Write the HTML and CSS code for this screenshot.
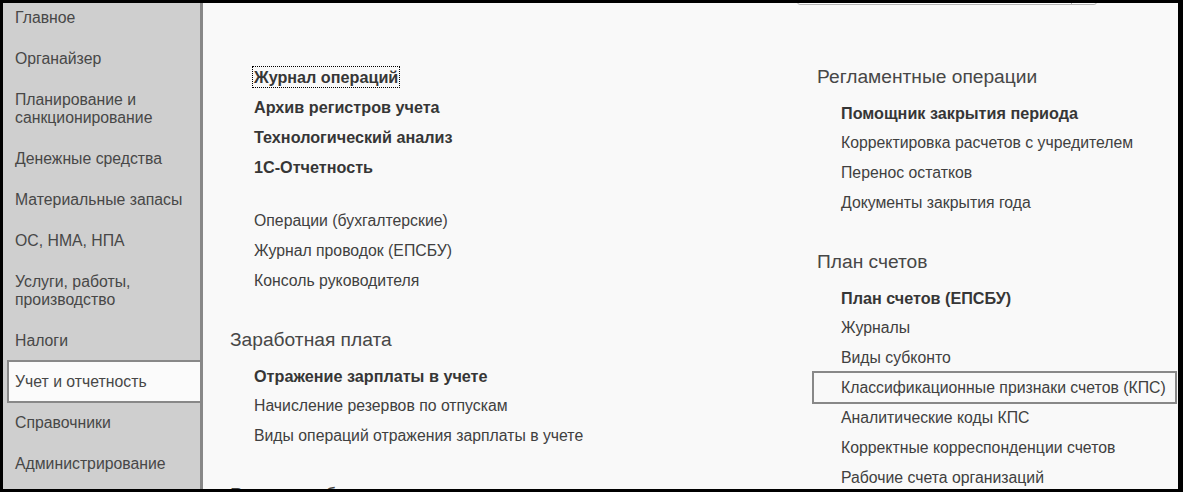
FILE: index.html
```html
<!DOCTYPE html>
<html lang="ru">
<head>
<meta charset="utf-8">
<link rel="stylesheet" href="styles.css">
</head>
<body>
<div class="frame">
  <nav class="sidebar">
    <ul class="sections">
      <li class="section">Главное</li>
      <li class="section">Органайзер</li>
      <li class="section">Планирование и<br>санкционирование</li>
      <li class="section">Денежные средства</li>
      <li class="section">Материальные запасы</li>
      <li class="section">ОС, НМА, НПА</li>
      <li class="section">Услуги, работы,<br>производство</li>
      <li class="section">Налоги</li>
      <li class="section active">Учет и отчетность</li>
      <li class="section">Справочники</li>
      <li class="section">Администрирование</li>
    </ul>
  </nav>
  <main class="content">
    <div class="toolbar">
      <div class="search"><span class="search-btn"></span></div>
      <span class="tool-mark"></span>
    </div>
    <div class="columns">
      <div class="column left">
        <div class="group first">
          <div class="item bold"><span class="focus">Журнал операций</span></div>
          <div class="item bold">Архив регистров учета</div>
          <div class="item bold">Технологический анализ</div>
          <div class="item bold">1С-Отчетность</div>
        </div>
        <div class="group">
          <div class="item">Операции (бухгалтерские)</div>
          <div class="item">Журнал проводок (ЕПСБУ)</div>
          <div class="item">Консоль руководителя</div>
        </div>
        <div class="group">
          <div class="heading">Заработная плата</div>
          <div class="item bold">Отражение зарплаты в учете</div>
          <div class="item">Начисление резервов по отпускам</div>
          <div class="item">Виды операций отражения зарплаты в учете</div>
        </div>
        <div class="group">
          <div class="heading">Расчеты с бюджетом</div>
        </div>
      </div>
      <div class="column right">
        <div class="group">
          <div class="heading">Регламентные операции</div>
          <div class="item bold">Помощник закрытия периода</div>
          <div class="item">Корректировка расчетов с учредителем</div>
          <div class="item">Перенос остатков</div>
          <div class="item">Документы закрытия года</div>
        </div>
        <div class="group">
          <div class="heading">План счетов</div>
          <div class="item bold">План счетов (ЕПСБУ)</div>
          <div class="item">Журналы</div>
          <div class="item">Виды субконто</div>
          <div class="item selected">Классификационные признаки счетов (КПС)</div>
          <div class="item">Аналитические коды КПС</div>
          <div class="item">Корректные корреспонденции счетов</div>
          <div class="item">Рабочие счета организаций</div>
        </div>
      </div>
    </div>
  </main>
</div>
</body>
</html>
```

FILE: styles.css
```css
* { box-sizing: border-box; }
html, body {
  margin: 0;
  padding: 0;
  background: #000;
  height: 100%;
  overflow: hidden;
}
.frame {
  display: flex;
  margin: 3px 5px 0 3px;
  height: 486px;
  overflow: hidden;
  background: #f9f9f9;
  font-family: "Liberation Sans", Arial, sans-serif;
}
.sidebar {
  width: 200px;
  flex: none;
  background: #cfcfcf;
  border-right: 3px solid #888;
  overflow: hidden;
}
.sections {
  list-style: none;
  margin: -7px 0 0 0;
  padding: 0;
}
.section {
  padding: 13px 8px 10px 12px;
  font-size: 15.8px;
  line-height: 18px;
  color: #474747;
}
.section.active {
  margin-left: 4px;
  margin-right: -3px;
  margin-bottom: -2px;
  padding: 11px 8px 10px 6px;
  background: #fbfbfb;
  border: 2px solid #888;
  border-right-width: 3px;
}
.content {
  flex: 1;
  min-width: 0;
  overflow: hidden;
}
.toolbar {
  display: flex;
  align-items: flex-end;
  height: 26px;
  margin-top: -24px;
  padding-left: 594px;
}
.search {
  position: relative;
  width: 300px;
  height: 26px;
  border: 1px solid #b5b5b5;
  border-radius: 3px;
  background: #fff;
}
.search-btn {
  position: absolute;
  right: 24px;
  top: 0;
  bottom: 0;
  border-left: 1px solid #b5b5b5;
}
.tool-mark {
  width: 8px;
  height: 2px;
  margin-left: 39px;
  margin-bottom: 24px;
  background: #bbb;
}
.columns {
  display: flex;
  padding: 50px 0 0 27px;
}
.column.left { width: 587px; flex: none; }
.column.right { flex: 1; }
.group + .group { margin-top: 24px; }
.group.first { padding-top: 5px; }
.heading {
  height: 41px;
  padding-top: 2px;
  line-height: 39px;
  font-size: 19.2px;
  color: #474747;
}
.item {
  height: 30px;
  padding-top: 4px;
  line-height: 26px;
  padding-left: 24px;
  font-size: 15.8px;
  color: #404040;
  white-space: nowrap;
}
.item.bold { font-weight: bold; font-size: 16.2px; color: #363636; }
.focus {
  outline: 1px dotted #000;
  outline-offset: 1px;
}
.item.selected {
  margin-left: -5px;
  margin-right: 1px;
  margin-bottom: -3px;
  padding-left: 27px;
  padding-top: 2px;
  line-height: 26px;
  height: 33px;
  border: 2px solid #888;
}
```
